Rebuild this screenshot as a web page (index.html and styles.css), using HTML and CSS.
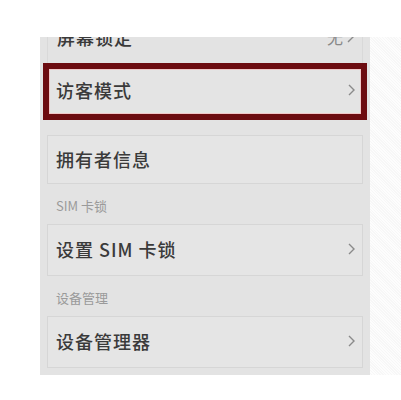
FILE: index.html
```html
<!DOCTYPE html>
<html>
<head>
<meta charset="utf-8">
<link rel="stylesheet" href="styles.css">
</head>
<body>
<div class="page">
  <div class="panel">
    <div class="row-top">
      <span class="title">屏幕锁定</span>
      <span class="value">无 <svg class="chev" viewBox="0 0 7 12" width="7" height="12"><polyline points="1,1 6,6 1,11" fill="none" stroke="#8a8a8a" stroke-width="1.4"/></svg></span>
    </div>
    <div class="item highlight">
      <span class="title">访客模式</span>
      <svg class="chev" viewBox="0 0 7 12" width="7" height="12"><polyline points="1,1 6,6 1,11" fill="none" stroke="#8a8a8a" stroke-width="1.4"/></svg>
    </div>
    <div class="item card first">
      <span class="title">拥有者信息</span>
    </div>
    <div class="label">SIM 卡锁</div>
    <div class="item card">
      <span class="title">设置 SIM 卡锁</span>
      <svg class="chev" viewBox="0 0 7 12" width="7" height="12"><polyline points="1,1 6,6 1,11" fill="none" stroke="#8a8a8a" stroke-width="1.4"/></svg>
    </div>
    <div class="label">设备管理</div>
    <div class="item card">
      <span class="title">设备管理器</span>
      <svg class="chev" viewBox="0 0 7 12" width="7" height="12"><polyline points="1,1 6,6 1,11" fill="none" stroke="#8a8a8a" stroke-width="1.4"/></svg>
    </div>
  </div>
  <div class="hatch"></div>
</div>
</body>
</html>
```
FILE: styles.css
```css
html, body {
  margin: 0;
  padding: 0;
  background: #ffffff;
  font-family: "Noto Sans CJK SC", "Noto Sans", sans-serif;
}
.page {
  display: flex;
  padding-top: 37px;
  padding-left: 40px;
  height: 400px;
  box-sizing: border-box;
}
.panel {
  width: 330px;
  height: 338px;
  background: #e3e3e3;
  overflow: hidden;
  display: flex;
  flex-direction: column;
}
.hatch {
  width: 31px;
  height: 338px;
  background: repeating-linear-gradient(45deg, #fdfdfd 0 1px, #f7f7f7 1px 2px);
}
.row-top {
  height: 26px;
  margin: 0 7px;
  padding: 0 8px 0 9px;
  display: flex;
  align-items: flex-start;
  justify-content: space-between;
  border-left: 1px solid #d9d9d9;
  border-right: 1px solid #d9d9d9;
}
.row-top .title {
  margin-top: -12px;
  line-height: 24px;
}
.row-top .value {
  margin-top: -12px;
  line-height: 24px;
  color: #888;
  font-size: 16px;
  display: flex;
  align-items: center;
  gap: 4px;
}
.title {
  font-size: 18px;
  color: #3a3a3a;
  font-weight: 500;
  letter-spacing: 1px;
}
.chev {
  display: block;
  flex: none;
}
.item {
  display: flex;
  align-items: center;
  justify-content: space-between;
}
.highlight {
  margin: 0 3px;
  height: 57px;
  border: 6px solid #6c0c10;
  box-shadow: inset 0 0 0 1px #f0c8c8;
  box-sizing: border-box;
  padding: 0 6px 4px 7px;
  background: #e4e4e4;
}
.card {
  margin: 0 7px;
  height: 52px;
  box-sizing: border-box;
  border: 1px solid #d6d6d6;
  background: #e5e5e5;
  padding: 0 7px 2px 8px;
}
.card.first {
  margin-top: 15px;
  height: 49px;
}
.label {
  height: 40px;
  display: flex;
  align-items: center;
  padding-left: 16px;
  padding-top: 2px;
  box-sizing: border-box;
  font-size: 13px;
  color: #9a9a9a;
}
```
